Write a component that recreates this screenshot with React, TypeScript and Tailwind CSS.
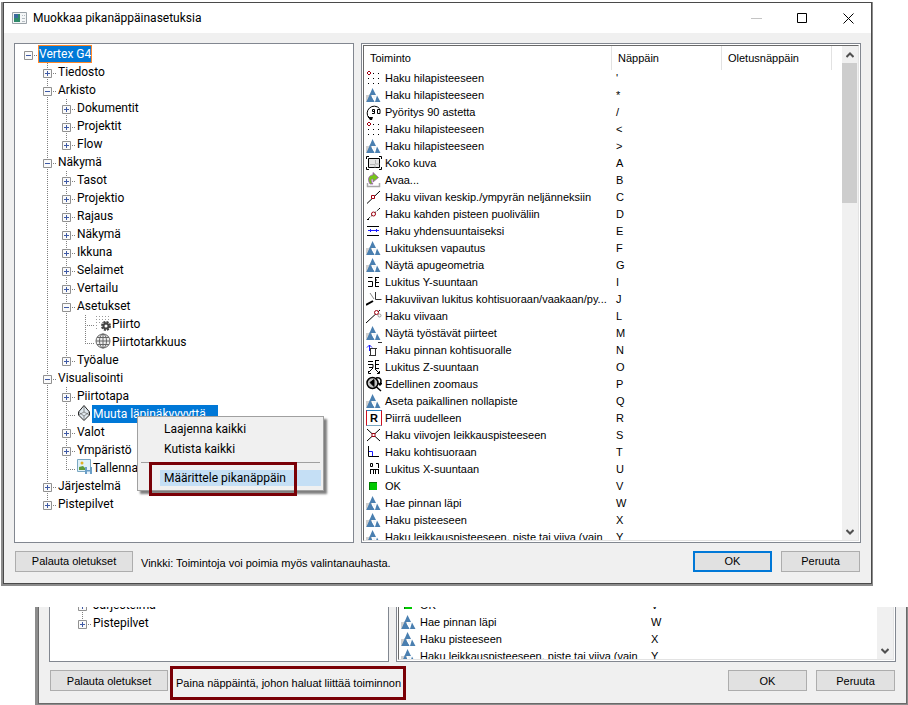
import React from "react";

type TreeItem = {
  label: string;
  guides: string;
  node?: "plus" | "minus";
  icon?: string;
  state?: "focused" | "selected";
};

type Shortcut = { icon: string; name: string; keyName: string };

// Guide letters, one per level: "v" passes through, "t" branches, "l" ends, "r" is the root.
const treeItems: TreeItem[] = [
  { label: "Vertex G4", guides: "r", node: "minus", state: "focused" },
  { label: "Tiedosto", guides: " t", node: "plus" },
  { label: "Arkisto", guides: " t", node: "minus" },
  { label: "Dokumentit", guides: " vt", node: "plus" },
  { label: "Projektit", guides: " vt", node: "plus" },
  { label: "Flow", guides: " vl", node: "plus" },
  { label: "Näkymä", guides: " t", node: "minus" },
  { label: "Tasot", guides: " vt", node: "plus" },
  { label: "Projektio", guides: " vt", node: "plus" },
  { label: "Rajaus", guides: " vt", node: "plus" },
  { label: "Näkymä", guides: " vt", node: "plus" },
  { label: "Ikkuna", guides: " vt", node: "plus" },
  { label: "Selaimet", guides: " vt", node: "plus" },
  { label: "Vertailu", guides: " vt", node: "plus" },
  { label: "Asetukset", guides: " vt", node: "minus" },
  { label: "Piirto", guides: " vvt", icon: "gear" },
  { label: "Piirtotarkkuus", guides: " vvl", icon: "globe" },
  { label: "Työalue", guides: " vl", node: "plus" },
  { label: "Visualisointi", guides: " t", node: "minus" },
  { label: "Piirtotapa", guides: " vt", node: "plus" },
  { label: "Muuta läpinäkyvyyttä", guides: " vt", icon: "cube", state: "selected" },
  { label: "Valot", guides: " vt", node: "plus" },
  { label: "Ympäristö", guides: " vt", node: "plus" },
  { label: "Tallenna", guides: " vl", icon: "picture" },
  { label: "Järjestelmä", guides: " t", node: "plus" },
  { label: "Pistepilvet", guides: " l", node: "plus" },
];

const shortcuts: Shortcut[] = [
  { icon: "grid", name: "Haku hilapisteeseen", keyName: "'" },
  { icon: "vertex", name: "Haku hilapisteeseen", keyName: "*" },
  { icon: "rotate", name: "Pyöritys 90 astetta", keyName: "/" },
  { icon: "grid", name: "Haku hilapisteeseen", keyName: "<" },
  { icon: "vertex", name: "Haku hilapisteeseen", keyName: ">" },
  { icon: "fit", name: "Koko kuva", keyName: "A" },
  { icon: "open", name: "Avaa...", keyName: "B" },
  { icon: "midpoint", name: "Haku viivan keskip./ympyrän neljänneksiin", keyName: "C" },
  { icon: "between", name: "Haku kahden pisteen puoliväliin", keyName: "D" },
  { icon: "parallel", name: "Haku yhdensuuntaiseksi", keyName: "E" },
  { icon: "vertex", name: "Lukituksen vapautus", keyName: "F" },
  { icon: "vertex", name: "Näytä apugeometria", keyName: "G" },
  { icon: "lockY", name: "Lukitus Y-suuntaan", keyName: "I" },
  { icon: "lockLine", name: "Hakuviivan lukitus kohtisuoraan/vaakaan/py...", keyName: "J" },
  { icon: "onLine", name: "Haku viivaan", keyName: "L" },
  { icon: "vertex", name: "Näytä työstävät piirteet", keyName: "M" },
  { icon: "normal", name: "Haku pinnan kohtisuoralle", keyName: "N" },
  { icon: "lockZ", name: "Lukitus Z-suuntaan", keyName: "O" },
  { icon: "zoomBack", name: "Edellinen zoomaus", keyName: "P" },
  { icon: "vertex", name: "Aseta paikallinen nollapiste", keyName: "Q" },
  { icon: "redraw", name: "Piirrä uudelleen", keyName: "R" },
  { icon: "cross", name: "Haku viivojen leikkauspisteeseen", keyName: "S" },
  { icon: "perp", name: "Haku kohtisuoraan", keyName: "T" },
  { icon: "lockX", name: "Lukitus X-suuntaan", keyName: "U" },
  { icon: "ok", name: "OK", keyName: "V" },
  { icon: "vertex", name: "Hae pinnan läpi", keyName: "W" },
  { icon: "vertex", name: "Haku pisteeseen", keyName: "X" },
  { icon: "vertex", name: "Haku leikkauspisteeseen, piste tai viiva (vain", keyName: "Y" },
];

const glyphs: Record<string, React.ReactNode> = {
  grid: (
    <>
      <path d="M7 3h1v1h-1zM12 3h1v1h-1zM2 8h1v1h-1zM7 8h1v1h-1zM12 8h1v1h-1zM2 13h1v1h-1zM7 13h1v1h-1zM12 13h1v1h-1z" fill="#000" />
      <path d="M2 1h2v1h1v2h-1v1h-2v-1h-1v-2h1zM2 2v2h2v-2z" fill="#a00010" fillRule="evenodd" />
    </>
  ),
  vertex: (
    <>
      <path d="M0 8h3l3-1v8H0z" fill="#cfcfcf" />
      <path d="M6.500 1L10 8H3.500zM4 8L8.500 15H0.500zM11 8.500L14.500 15H9z" fill="#4a7fb0" />
      <path d="M4 7l4.500 8H0.500z" fill="#4a7fb0" />
      <path d="M6.500 8.500h3.500L8.500 12z" fill="#eef3f7" />
    </>
  ),
  rotate: (
    <>
      <path d="M3 14A7 7 0 1 1 13.500 4.500" fill="none" stroke="#000" />
      <path d="M2 13h5l-1 3H4zM2 12h1v1h-1z" fill="#000" />
      <path d="M6.500 5.500h2v4H6M8.500 7.500h-2V5.500M11.500 5.500H14v4h-2.500z" fill="none" stroke="#000" />
    </>
  ),
  fit: (
    <>
      <path d="M2.500 3.500h11v9h-11z" fill="#e4e4e4" stroke="#000" />
      <path d="M4 9.500h5v3M9.500 5v4h4" fill="none" stroke="#b4b4b4" />
      <path d="M0.500 4V1.500H3M13 1.500h2.500V4M15.500 12v2.500H13M3 14.500H0.500V12" fill="none" stroke="#000" />
    </>
  ),
  open: (
    <>
      <path d="M1.500 11v3.500h12V11" fill="none" stroke="#a8a8a8" strokeWidth="1.500" />
      <path d="M4 12C1 7 3 3 7 3V0.500l5.500 5L7 10V7C5 7 4.500 9 7 12z" fill="#76c51a" stroke="#9a58b5" strokeWidth="0.800" />
    </>
  ),
  midpoint: (
    <>
      <path d="M1 14.500L14 2" stroke="#000" />
      <path d="M5.500 6.500h3v3h-3z" fill="#fff" stroke="#a00010" />
    </>
  ),
  between: (
    <>
      <path d="M2 13L13 3" stroke="#333" strokeDasharray="3 1" />
      <circle cx="7.500" cy="8" r="2" fill="#fff" stroke="#a00010" />
      <path d="M1 13h2v1H1zM13 2h1v1h-1z" fill="#000" />
    </>
  ),
  parallel: (
    <>
      <path d="M1 3.500h12M1 12.500h12" stroke="#000" />
      <path d="M2 7.500h11M4.500 6v3M10.500 6v3" fill="none" stroke="#1a1aff" />
    </>
  ),
  lockY: <path d="M2 3.500h4.500M2 7.500h4.500v5H2M9.500 3v10M9 3.500h4M9 8.500h4M9 12.500h4M9 6h2" fill="none" stroke="#000" />,
  lockLine: (
    <>
      <path d="M4 2l4 6" fill="none" stroke="#888" />
      <path d="M9.500 1v7.500h6" fill="none" stroke="#333" />
      <path d="M0 14l7-4" stroke="#000" strokeWidth="2" />
    </>
  ),
  onLine: (
    <>
      <path d="M0 15L14 2" stroke="#000" />
      <circle cx="10.500" cy="4.500" r="2" fill="#fff" stroke="#a00010" />
      <circle cx="13.500" cy="7.500" r="1.500" fill="none" stroke="#999" />
    </>
  ),
  normal: (
    <>
      <path d="M12 0.500h4M3 6.500h8M3 13.500h7M4.500 6v7M9.500 6v8" fill="none" stroke="#333" />
      <path d="M3.500 9V3M1 5.500l2.500-2.500L6 5.500" fill="none" stroke="#1a1aff" />
    </>
  ),
  lockZ: <path d="M2 2.500h5M2 5.500h5v3H3M9.500 1v9M9 1.500h4M9 5.500h4M9 9.500h4M7 9l-5 5M9 10l4 4M2.500 12v2.500H5M13.500 12v2.500H11" fill="none" stroke="#000" />,
  zoomBack: (
    <>
      <circle cx="6.500" cy="7" r="5.500" fill="#c4c4c4" stroke="#000" strokeWidth="1.500" />
      <path d="M4 6.500l4-3v7z" fill="#000" stroke="#000" />
      <path d="M10.500 11l4.500 4M10 2c5-1.500 6 3 4 6M12 7l2 2 2-2" fill="none" stroke="#000" strokeWidth="1.500" />
    </>
  ),
  cross: (
    <>
      <path d="M1 2l13 12M14 2L1 14" stroke="#000" />
      <path d="M6 6.500h3v3H6z" fill="#fff" stroke="#a00010" />
    </>
  ),
  perp: (
    <>
      <path d="M2.500 2v10.500H13" fill="none" stroke="#000" />
      <path d="M3 7.500h3.500V12" fill="none" stroke="#1a1aff" />
    </>
  ),
  lockX: <path d="M4.500 2.500h2v3h-2zM10 2.500h2.500V7M4 8.500h9M4.500 8v5M7.500 8v5M9.500 8v5M12.500 8v5" fill="none" stroke="#000" />,
  ok: (
    <>
      <path d="M3 4h8v8H3z" fill="#00c800" />
      <path d="M3.500 12V4.500h7.500" fill="none" stroke="#007800" />
    </>
  ),
  gear: (
    <>
      <path d="M1 1.500h15M1 4.500h15M1 7.500h15M1 10.500h3M1 13.500h3" stroke="#999" strokeDasharray="1 2" />
      <circle cx="11" cy="11" r="4" fill="none" stroke="#444" strokeWidth="2" strokeDasharray="2 1.140" />
      <circle cx="11" cy="11" r="2.500" fill="#fff" stroke="#444" strokeWidth="2" />
    </>
  ),
  globe: (
    <>
      <circle cx="8" cy="8" r="7" fill="#eee" stroke="#666" />
      <path d="M8 1v14M1 8h14M2 4.500h12M2 11.500h12" stroke="#666" />
      <ellipse cx="8" cy="8" rx="3.500" ry="7" fill="none" stroke="#666" />
    </>
  ),
  cube: (
    <>
      <path d="M8 0.500l5.500 6.500v3L8 15.500 2.500 10V7z" fill="#dfe8ee" stroke="#222" />
      <path d="M2.500 7L8 11l5.500-4M8 11v4M8 1v6M2.500 10L8 7l5.500 3" fill="none" stroke="#666" strokeWidth="0.700" />
    </>
  ),
  picture: (
    <>
      <path d="M1.500 0.500h13v12h-13z" fill="#dff1f8" stroke="#7ba7c2" />
      <path d="M3 11V8l4-1 3 3v1z" fill="#5d9b3a" />
      <circle cx="6" cy="4" r="1.500" fill="#e0b020" />
      <path d="M9 8h7v7H9z" fill="#6b9fc8" />
      <path d="M11 8h3v3h-3zM11 12.500h3V15h-3z" fill="#e8f2fa" />
    </>
  ),
};

function Glyph({ name }: { name: string }) {
  if (name === "redraw") {
    return (
      <span className="flex size-4 shrink-0 items-center justify-center self-start border border-t-[#2a7fc0] border-r-[#d01020] border-b-[#7ba7c2] border-l-[#d01020] text-[11px] leading-none font-bold">
        R
      </span>
    );
  }
  return (
    <svg className="size-4 shrink-0 self-start" viewBox="0 0 16 16" aria-hidden="true">
      {glyphs[name]}
    </svg>
  );
}

function Guide({ kind, node, branch }: { kind: string; node?: "plus" | "minus"; branch: boolean }) {
  return (
    <svg className="h-[18px] w-[19px] shrink-0" viewBox="0 0 19 18" aria-hidden="true">
      <g stroke="#808080" strokeDasharray="1 1">
        {(kind === "v" || kind === "t") && <path d="M9.500 0v18" />}
        {kind === "l" && <path d="M9.500 0v11" />}
        {branch && <path d="M9 10.500h10" />}
      </g>
      {node && (
        <>
          <path d="M5.500 6.500h8v8h-8z" fill="#fafafa" stroke="#919191" />
          <path d={node === "plus" ? "M7 10.500h5M9.500 8v5" : "M7 10.500h5"} stroke="#3f5aa5" />
        </>
      )}
    </svg>
  );
}

function Tree({ items }: { items: TreeItem[] }) {
  return (
    <ul className="pl-1 font-[Roboto,'Open_Sans',sans-serif] text-[12px]">
      {items.map((item, i) => (
        <li key={i} className="flex h-[18px] items-center whitespace-nowrap">
          {item.guides.split("").map((kind, level) => {
            const own = level === item.guides.length - 1;
            return <Guide key={level} kind={kind} node={own ? item.node : undefined} branch={own} />;
          })}
          {item.icon && <Glyph name={item.icon} />}
          <span
            className={
              item.state === "focused"
                ? "border border-[#ff8728] bg-[#0078d7] leading-4 text-white"
                : item.state === "selected"
                  ? "bg-[#0078d7] pr-3 pl-px leading-[18px] text-white"
                  : "pl-px leading-[18px]"
            }
          >
            {item.label}
          </span>
        </li>
      ))}
    </ul>
  );
}

function ShortcutTable({ items, header }: { items: Shortcut[]; header: boolean }) {
  return (
    <table className="w-full table-fixed border-separate border-spacing-0 text-left whitespace-nowrap">
      <colgroup>
        <col className="w-[248px]" />
        <col className="w-[110px]" />
        <col className="w-[110px]" />
        <col />
      </colgroup>
      {header && (
        <thead>
          <tr className="h-6">
            {["Toiminto", "Näppäin", "Oletusnäppäin"].map((title) => (
              <th key={title} className="border-r border-[#e2e2e2] p-0 pl-1.5 font-normal">
                {title}
              </th>
            ))}
            <th className="p-0" />
          </tr>
        </thead>
      )}
      <tbody>
        {items.map((item, i) => (
          <tr key={i} className="h-[17px]">
            <td className="p-0 pl-0.5">
              <span className="flex h-[17px] items-center gap-[3px]">
                <Glyph name={item.icon} />
                {item.name}
              </span>
            </td>
            <td className="p-0 pl-1">{item.keyName}</td>
            <td className="p-0" />
            <td className="p-0" />
          </tr>
        ))}
      </tbody>
    </table>
  );
}

function Arrow({ up }: { up?: boolean }) {
  return (
    <button type="button" aria-label={up ? "Ylös" : "Alas"} className="flex h-[17px] w-full shrink-0 items-center justify-center">
      <svg className="h-2 w-2" viewBox="0 0 8 8" aria-hidden="true">
        <path d={up ? "M0.500 6L4 2.500 7.500 6" : "M0.500 2L4 5.500 7.500 2"} fill="none" stroke="#505050" strokeWidth="2" />
      </svg>
    </button>
  );
}

function Footer({ primary, children }: { primary: boolean; children: React.ReactNode }) {
  const button = "h-[21px] border border-[#adadad] bg-[#e1e1e1]";
  return (
    <footer className="flex items-center px-px pt-2 pb-[11px]">
      <button type="button" className={`${button} w-[118px]`}>
        Palauta oletukset
      </button>
      {children}
      <div className="ml-auto flex gap-[9px]">
        <button
          type="button"
          className={primary ? "h-[21px] w-[79px] border-2 border-[#0078d7] bg-[#e1e1e1]" : `${button} w-[79px]`}
        >
          OK
        </button>
        <button type="button" className={`${button} w-[79px]`}>
          Peruuta
        </button>
      </div>
    </footer>
  );
}

function ContextMenu() {
  const item = "block h-5 w-full pl-[26px] text-left";
  return (
    <div
      role="menu"
      className="absolute top-[372px] left-[122px] h-[75px] w-[187px] border border-[#a0a0a0] bg-[#f0f0f0] pt-0.5 font-[Roboto,'Open_Sans',sans-serif] text-[12px] shadow-[3px_3px_2px_rgba(0,0,0,0.5)]"
    >
      <button role="menuitem" type="button" className={item}>
        Laajenna kaikki
      </button>
      <button role="menuitem" type="button" className={item}>
        Kutista kaikki
      </button>
      <hr className="mx-[3px] mt-[3px] border-[#a0a0a0]" />
      <button
        role="menuitem"
        type="button"
        className="mt-[7px] mr-0.5 ml-[22px] block h-4 w-[161px] bg-[#c5dff5] pl-1 text-left leading-4"
      >
        Määrittele pikanäppäin
      </button>
      <div className="pointer-events-none absolute top-[45px] left-[11px] h-[34px] w-[148px] border-[3px] border-[#7a0006]" />
    </div>
  );
}

export default function App() {
  return (
    <main className="min-h-screen overflow-hidden bg-white pt-0.5 font-['Liberation_Sans',Arial,sans-serif] text-[11px] text-black">
      <section className="mr-[35px] ml-px border-r border-b-2 border-l-2 border-[#8c8c8c]">
        <div className="border border-[#4a4a4a] bg-[#f0f0f0]">
          <header className="flex h-[30px] items-center bg-white pr-[17px] pl-2 font-[Roboto,'Open_Sans',sans-serif] text-[12px]">
            <svg className="mr-[5px] h-3 w-4" viewBox="0 0 16 12" aria-hidden="true">
              <path d="M0.500 0.500h14v11H0.500z" fill="#f4f6f7" stroke="#9aa2a8" />
              <path d="M2 2h6v8H2z" fill="#2f8a6a" />
              <path d="M2 2h4v4H2z" fill="#3b6a9f" />
              <path d="M10 3h1v1h-1zM12 3h1v1h-1zM10 6h3v1h-3zM10 9h3v1h-3z" fill="#b5bcc2" />
            </svg>
            <h1>Muokkaa pikanäppäinasetuksia</h1>
            <div className="ml-auto flex items-center gap-[35px]">
              <button type="button" aria-label="Pienennä">
                <svg className="size-[11px]" viewBox="0 0 11 11">
                  <path d="M0 5.500h11" stroke="#c4c4c4" />
                </svg>
              </button>
              <button type="button" aria-label="Suurenna">
                <svg className="size-[11px]" viewBox="0 0 11 11">
                  <path d="M0.500 0.500h9v9h-9z" fill="none" stroke="#000" />
                </svg>
              </button>
              <button type="button" aria-label="Sulje">
                <svg className="size-[11px]" viewBox="0 0 11 11">
                  <path d="M0.500 0.500l10 10M10.500 0.500l-10 10" stroke="#000" />
                </svg>
              </button>
            </div>
          </header>
          <div className="px-[10px] pt-[10px]">
            <div className="flex h-[500px] gap-[7px]">
              <div className="relative w-[340px] shrink-0 border border-[#828790] bg-white pt-px">
                <Tree items={treeItems} />
                <ContextMenu />
              </div>
              <div className="min-w-0 flex-1 border border-[#828790] bg-white p-px">
                <div className="flex h-full border border-t-[#696969] border-r-[#e3e3e3] border-b-[#e3e3e3] border-l-[#696969]">
                  <div className="min-w-0 flex-1 overflow-hidden">
                    <ShortcutTable items={shortcuts} header />
                  </div>
                  <div className="flex w-4 flex-col bg-[#f0f0f0]">
                    <Arrow up />
                    <div className="mr-px h-[140px] bg-[#cdcdcd]" />
                    <div className="flex-1" />
                    <Arrow />
                  </div>
                </div>
              </div>
            </div>
            <Footer primary>
              <p className="mt-1 ml-2">Vinkki: Toimintoja voi poimia myös valintanauhasta.</p>
            </Footer>
          </div>
        </div>
      </section>

      <section className="mt-[21px] ml-[35px] border-r border-b-2 border-l-[3px] border-[#8c8c8c]">
        <div className="border border-t-0 border-[#6a6a6a] bg-[#f0f0f0] px-[10px]">
          <div className="flex h-[55px] gap-[7px]">
            <div className="w-[340px] shrink-0 overflow-hidden border border-t-0 border-[#828790] bg-white">
              <div className="-mt-[11px]">
                <Tree items={treeItems.slice(-2)} />
              </div>
            </div>
            <div className="min-w-0 flex-1 border border-t-0 border-[#828790] bg-white px-px pb-px">
              <div className="flex h-full border border-t-0 border-r-[#e3e3e3] border-b-[#e3e3e3] border-l-[#696969]">
                <div className="min-w-0 flex-1 overflow-hidden">
                  <div className="-mt-[10px]">
                    <ShortcutTable items={shortcuts.slice(-4)} header={false} />
                  </div>
                </div>
                <div className="flex w-4 flex-col justify-end bg-[#f0f0f0]">
                  <Arrow />
                </div>
              </div>
            </div>
          </div>
          <Footer primary={false}>
            <p className="-mt-1 -mb-2 ml-0.5 border-[3px] border-[#7a0006] pt-[6px] pr-0.5 pb-[5px] pl-[3px]">
              Paina näppäintä, johon haluat liittää toiminnon
            </p>
          </Footer>
        </div>
      </section>
    </main>
  );
}
